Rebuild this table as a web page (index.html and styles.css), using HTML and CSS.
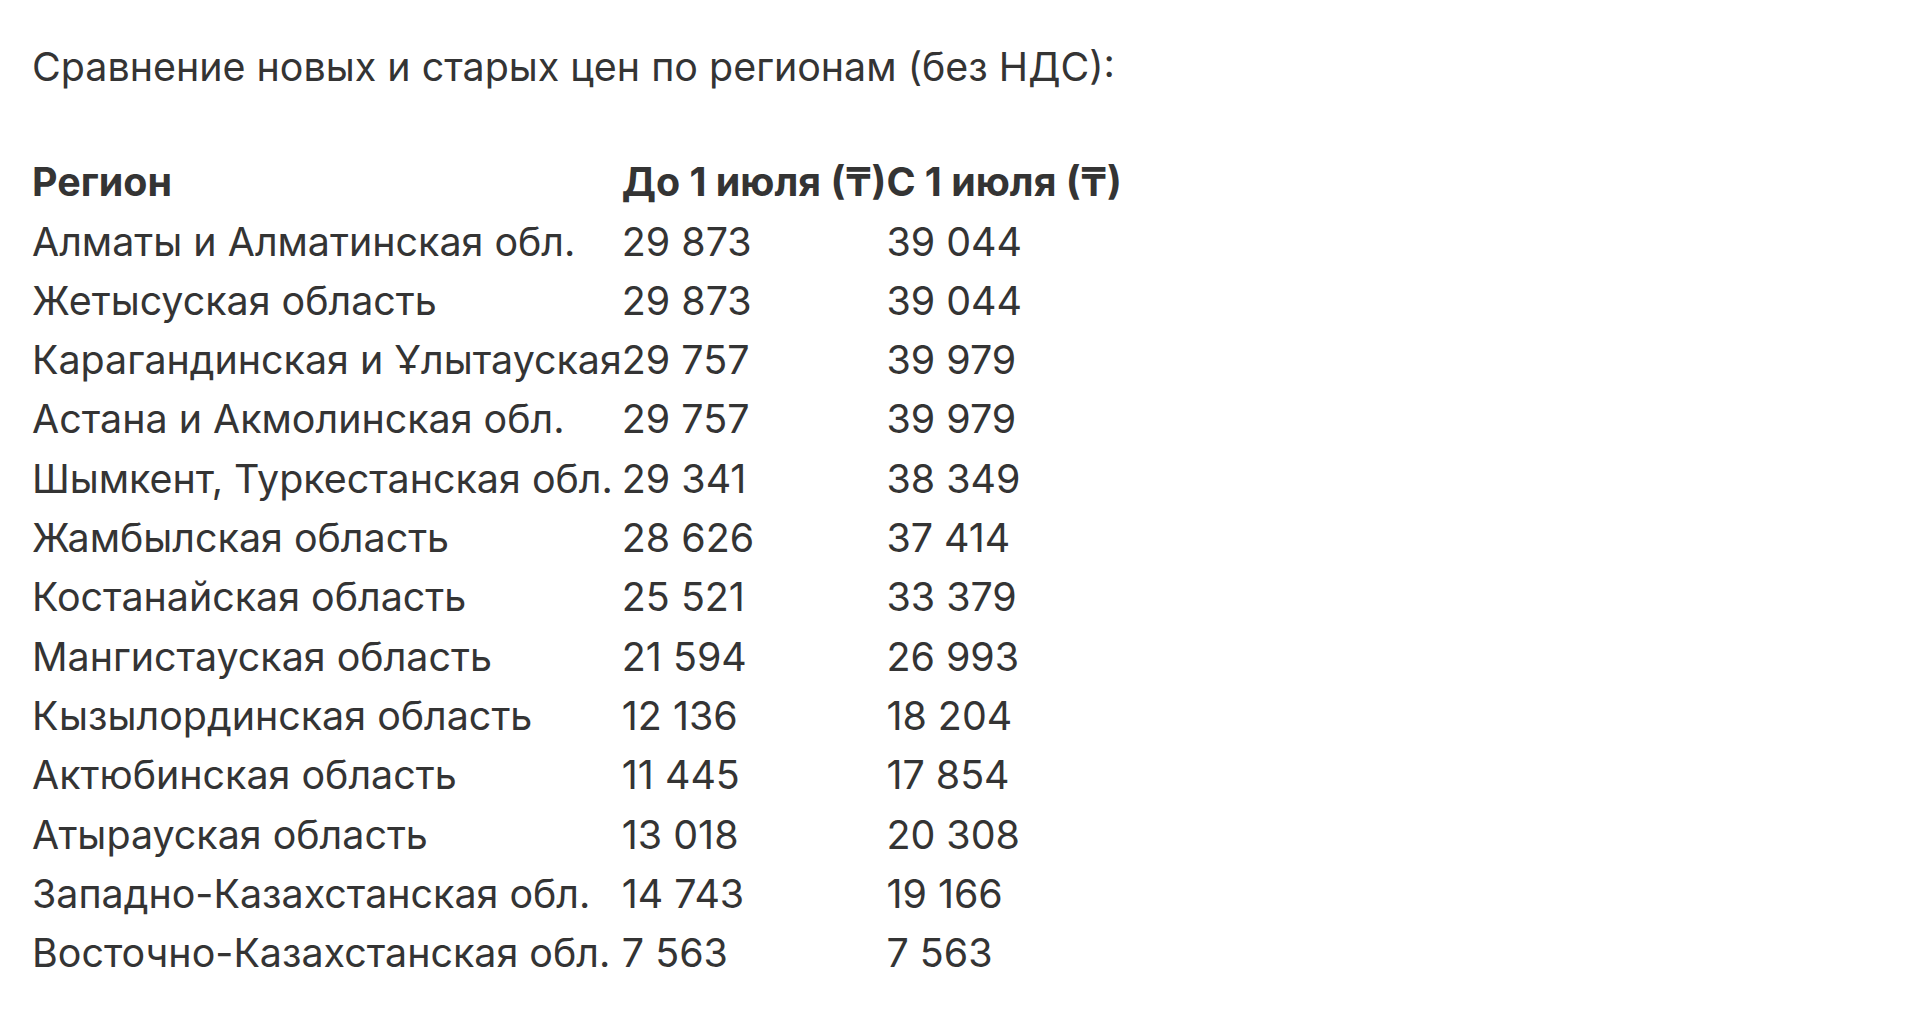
FILE: index.html
```html
<!DOCTYPE html>
<html lang="ru">
<head>
<meta charset="utf-8">
<title>Сравнение цен</title>
<link rel="stylesheet" href="styles.css">
</head>
<body>
<main class="doc">
  <p class="lead">Сравнение новых и старых цен по регионам (без НДС):</p>
  <table class="prices">
    <thead>
      <tr><th>Регион</th><th>До 1 июля (₸)</th><th>С 1 июля (₸)</th></tr>
    </thead>
    <tbody>
      <tr><td>Алматы и Алматинская обл.</td><td>29 873</td><td>39 044</td></tr>
      <tr><td>Жетысуская область</td><td>29 873</td><td>39 044</td></tr>
      <tr><td>Карагандинская и Ұлытауская</td><td>29 757</td><td>39 979</td></tr>
      <tr><td>Астана и Акмолинская обл.</td><td>29 757</td><td>39 979</td></tr>
      <tr><td>Шымкент, Туркестанская обл.</td><td>29 341</td><td>38 349</td></tr>
      <tr><td>Жамбылская область</td><td>28 626</td><td>37 414</td></tr>
      <tr><td>Костанайская область</td><td>25 521</td><td>33 379</td></tr>
      <tr><td>Мангистауская область</td><td>21 594</td><td>26 993</td></tr>
      <tr><td>Кызылординская область</td><td>12 136</td><td>18 204</td></tr>
      <tr><td>Актюбинская область</td><td>11 445</td><td>17 854</td></tr>
      <tr><td>Атырауская область</td><td>13 018</td><td>20 308</td></tr>
      <tr><td>Западно-Казахстанская обл.</td><td>14 743</td><td>19 166</td></tr>
      <tr><td>Восточно-Казахстанская обл.</td><td>7 563</td><td>7 563</td></tr>
    </tbody>
  </table>
</main>
</body>
</html>
```

FILE: styles.css
```css
html, body {
  margin: 0;
  padding: 0;
  background: #ffffff;
}

body {
  font-family: Inter, "Noto Sans", "DejaVu Sans", sans-serif;
  font-size: 39.4px;
  line-height: 59.3px;
  color: #343434;
}

.doc {
  padding: 38px 0 0 32px;
}

.lead {
  margin: 0 0 56px 0;
}

.prices {
  border-collapse: collapse;
  border-spacing: 0;
}

.prices th,
.prices td {
  padding: 0;
  text-align: left;
  white-space: nowrap;
  vertical-align: baseline;
}

.prices th {
  font-weight: 700;
}
```
